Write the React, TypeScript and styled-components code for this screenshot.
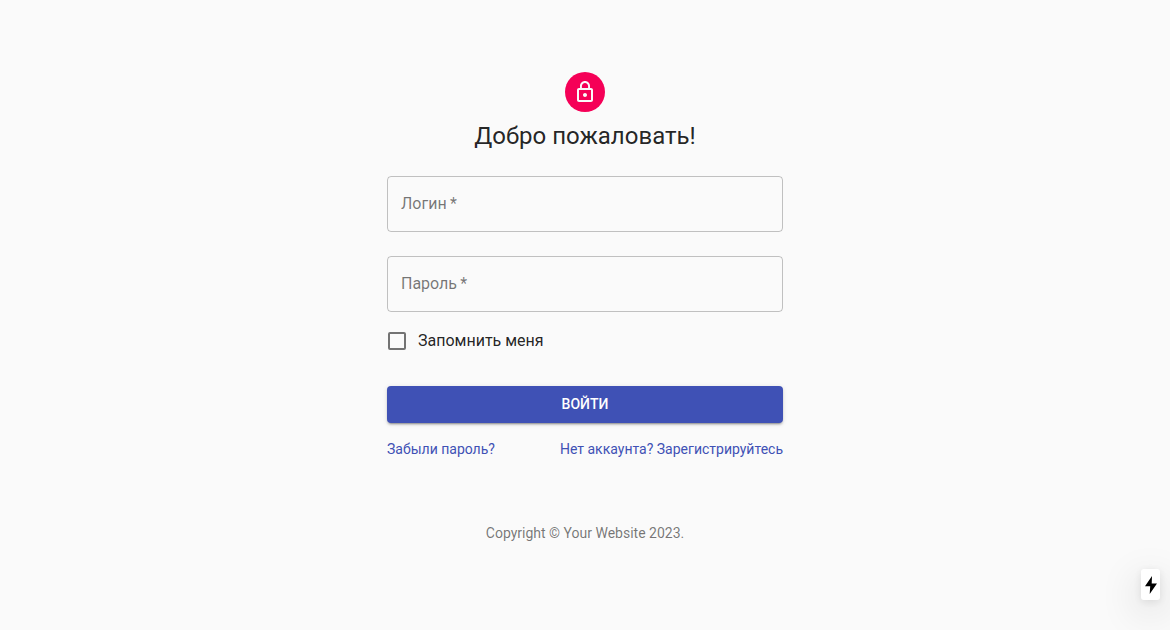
import React, { useState } from 'react';
import styled, { createGlobalStyle } from 'styled-components';

const GlobalStyle = createGlobalStyle`
  *, *::before, *::after { box-sizing: border-box; }
  body {
    margin: 0;
    background: #fafafa;
    color: rgba(0, 0, 0, 0.87);
    font-family: Roboto, "Liberation Sans", sans-serif;
    font-size: 14px;
    line-height: 20px;
  }
`;

const Container = styled.main`
  width: 100%;
  max-width: 444px;
  margin: 0 auto;
  padding: 72px 24px 24px;
`;

const Header = styled.header`
  display: flex;
  flex-direction: column;
  align-items: center;
  gap: 8px;
`;

const Avatar = styled.div`
  display: flex;
  align-items: center;
  justify-content: center;
  width: 40px;
  height: 40px;
  border-radius: 50%;
  background: #f50057;
  color: #fafafa;
`;

const Title = styled.h1`
  margin: 0;
  font-size: 24px;
  font-weight: 400;
  line-height: 32px;
`;

const Form = styled.form`
  margin-top: 24px;
`;

const Fields = styled.div`
  display: flex;
  flex-direction: column;
  gap: 24px;
`;

const FieldBox = styled.div`
  position: relative;
`;

const FieldLabel = styled.label<{ $raised: boolean }>`
  position: absolute;
  left: ${(p) => (p.$raised ? '10px' : '14px')};
  top: ${(p) => (p.$raised ? '-8px' : '16px')};
  padding: ${(p) => (p.$raised ? '0 4px' : '0')};
  background: ${(p) => (p.$raised ? '#fafafa' : 'transparent')};
  color: rgba(0, 0, 0, 0.54);
  font-size: ${(p) => (p.$raised ? '12px' : '16px')};
  line-height: ${(p) => (p.$raised ? '16px' : '24px')};
  pointer-events: none;
`;

const FieldInput = styled.input`
  display: block;
  width: 100%;
  height: 56px;
  padding: 0 14px;
  border: 1px solid rgba(0, 0, 0, 0.23);
  border-radius: 4px;
  background: transparent;
  color: inherit;
  font: inherit;
  font-size: 16px;
  outline: none;

  &:focus { border-color: #3f51b5; }
`;

const Remember = styled.label`
  display: inline-flex;
  align-items: center;
  gap: 12px;
  margin-top: 8px;
  height: 42px;
  padding-left: 1px;
  font-size: 16px;
  line-height: 24px;
  cursor: pointer;
`;

const Checkbox = styled.input`
  appearance: none;
  width: 18px;
  height: 18px;
  margin: 0;
  border: 2px solid rgba(0, 0, 0, 0.54);
  border-radius: 2px;
  cursor: pointer;

  &:checked {
    border-color: #3f51b5;
    background: #3f51b5;
  }
`;

const Submit = styled.button`
  display: block;
  width: 100%;
  margin: 24px 0 16px;
  padding: 6px 16px;
  border: 0;
  border-radius: 4px;
  background: #3f51b5;
  color: #fff;
  font-family: inherit;
  font-size: 14px;
  font-weight: 500;
  line-height: 25px;
  text-transform: uppercase;
  box-shadow: 0 3px 1px -2px rgba(0, 0, 0, 0.2), 0 2px 2px 0 rgba(0, 0, 0, 0.14),
    0 1px 5px 0 rgba(0, 0, 0, 0.12);
  cursor: pointer;
`;

const Links = styled.nav`
  display: flex;
  justify-content: space-between;
`;

const TextLink = styled.a`
  color: #3f51b5;
  text-decoration: none;

  &:hover { text-decoration: underline; }
`;

const Copyright = styled.footer`
  margin-top: 64px;
  color: rgba(0, 0, 0, 0.54);
  text-align: center;
`;

const BoltButton = styled.button`
  position: fixed;
  right: 10px;
  bottom: 30px;
  display: flex;
  align-items: center;
  justify-content: center;
  width: 19px;
  height: 31px;
  padding: 0;
  border: 0;
  border-radius: 3px;
  background: #fff;
  color: #000;
  box-shadow: 0 11px 40px 0 rgba(0, 0, 0, 0.2), 0 2px 10px 0 rgba(0, 0, 0, 0.1);
`;

type FieldProps = { id: string; label: string; type: string; autoComplete: string };

function Field({ id, label, type, autoComplete }: FieldProps) {
  const [value, setValue] = useState('');
  const [focused, setFocused] = useState(false);
  return (
    <FieldBox>
      <FieldLabel htmlFor={id} $raised={focused || value !== ''}>
        {label}&thinsp;*
      </FieldLabel>
      <FieldInput
        id={id}
        name={id}
        type={type}
        autoComplete={autoComplete}
        required
        value={value}
        onChange={(e) => setValue(e.target.value)}
        onFocus={() => setFocused(true)}
        onBlur={() => setFocused(false)}
      />
    </FieldBox>
  );
}

export default function App() {
  return (
    <>
      <GlobalStyle />
      <Container>
        <Header>
          <Avatar>
            <svg width="24" height="24" viewBox="0 0 24 24" fill="currentColor" aria-hidden="true">
              <path d="M12 17c1.1 0 2-.9 2-2s-.9-2-2-2-2 .9-2 2 .9 2 2 2zm6-9h-1V6c0-2.76-2.24-5-5-5S7 3.24 7 6v2H6c-1.1 0-2 .9-2 2v10c0 1.1.9 2 2 2h12c1.1 0 2-.9 2-2V10c0-1.1-.9-2-2-2zM8.9 6c0-1.71 1.39-3.1 3.1-3.1s3.1 1.39 3.1 3.1v2H8.9V6zM18 20H6V10h12v10z" />
            </svg>
          </Avatar>
          <Title>Добро пожаловать!</Title>
        </Header>
        <Form onSubmit={(e) => e.preventDefault()}>
          <Fields>
            <Field id="login" label="Логин" type="text" autoComplete="username" />
            <Field id="password" label="Пароль" type="password" autoComplete="current-password" />
          </Fields>
          <Remember>
            <Checkbox type="checkbox" name="remember" />
            Запомнить меня
          </Remember>
          <Submit type="submit">Войти</Submit>
          <Links>
            <TextLink href="#forgot">Забыли пароль?</TextLink>
            <TextLink href="#signup">Нет аккаунта? Зарегистрируйтесь</TextLink>
          </Links>
        </Form>
        <Copyright>Copyright © Your Website 2023.</Copyright>
      </Container>
      <BoltButton type="button" aria-label="Quick actions">
        <svg width="12" height="18" viewBox="0 0 12 18" fill="currentColor" aria-hidden="true">
          <path d="M7 0 0 10.3h5.2L4.7 18 12 7.6H6.7z" />
        </svg>
      </BoltButton>
    </>
  );
}
